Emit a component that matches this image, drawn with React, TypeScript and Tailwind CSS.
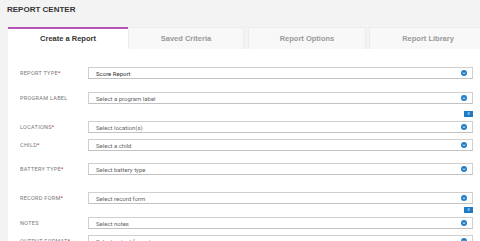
import React from "react";

interface Field {
  label: string;
  required: boolean;
  value: string;
  filled?: boolean;
  gap: string;
  badge?: boolean;
}

const fields: Field[] = [
  { label: "REPORT TYPE", required: true, value: "Score Report", filled: true, gap: "mt-0" },
  { label: "PROGRAM LABEL", required: false, value: "Select a program label", gap: "mt-[13px]" },
  { label: "LOCATIONS", required: true, value: "Select location(s)", gap: "mt-[7px]", badge: true },
  { label: "CHILD", required: true, value: "Select a child", gap: "mt-[6px]" },
  { label: "BATTERY TYPE", required: true, value: "Select battery type", gap: "mt-[12px]" },
  { label: "RECORD FORM", required: true, value: "Select record form", gap: "mt-[17px]" },
  { label: "NOTES", required: false, value: "Select notes", gap: "mt-[3px]", badge: true },
  { label: "OUTPUT FORMAT", required: true, value: "Select output format", gap: "mt-[6px]" },
];

const tabs = [
  { name: "Create a Report", cls: "w-[120px] bg-white border-t-2 border-[#b552b8] text-[#333]" },
  { name: "Saved Criteria", cls: "w-[116px] bg-[#f8f8f8] border border-b-0 border-[#ececec] text-[#999]" },
  { name: "Report Options", cls: "w-[118px] ml-[4px] bg-[#f8f8f8] border border-b-0 border-[#ececec] text-[#999]" },
  { name: "Report Library", cls: "w-[118px] ml-[3px] bg-[#f8f8f8] border border-b-0 border-[#ececec] text-[#999]" },
];

function Chevron() {
  return (
    <svg width="6" height="6" viewBox="0 0 10 10" className="shrink-0">
      <circle cx="5" cy="5" r="5" fill="#1f7fc8" />
      <path d="M2.8 4.2 L5 6.3 L7.2 4.2" stroke="#fff" strokeWidth="1.4" fill="none" />
    </svg>
  );
}

export default function App() {
  return (
    <div className="w-[480px] h-[241px] overflow-hidden bg-[#f3f3f3] font-['Liberation_Sans',Arial,sans-serif]">
      {/* title */}
      <div className="pl-[7px] pt-[5px] h-[27px] text-[8px] font-bold text-[#333] leading-[9px]">
        REPORT CENTER
      </div>

      {/* tabs */}
      <div className="flex pl-2 h-[22px] w-[600px]">
        {tabs.map((t) => (
          <div
            key={t.name}
            className={`flex items-center justify-center text-[7.5px] font-bold ${t.cls}`}
          >
            {t.name}
          </div>
        ))}
      </div>

      {/* panel */}
      <div className="ml-2 bg-white h-[200px] pt-[18px] pl-3 pr-[7px] font-['Roboto',Arial,sans-serif]">
        {fields.map((f) => (
          <div key={f.label} className={f.gap}>
            {f.badge && (
              <div className="flex justify-end mb-[4px]">
                <div className="w-[9px] h-[6px] bg-[#1f7ac4] text-white text-[4px] leading-[6px] text-center">0</div>
              </div>
            )}
            <div className="flex items-center">
              <div className="w-[68px] shrink-0 text-[5.5px] text-[#777] tracking-[0.3px]">
                {f.label}
                {f.required && <span className="text-[#d0021b]">*</span>}
              </div>
              <div className="flex-1 h-[12px] flex items-center justify-between border border-[#cfcfcf] border-b-[#c2c2c2] pl-[7px] pr-[5px]">
                <span className={f.filled ? "text-[6px] text-[#333]" : "text-[6px] text-[#666]"}>{f.value}</span>
                <Chevron />
              </div>
            </div>
          </div>
        ))}
      </div>
    </div>
  );
}
